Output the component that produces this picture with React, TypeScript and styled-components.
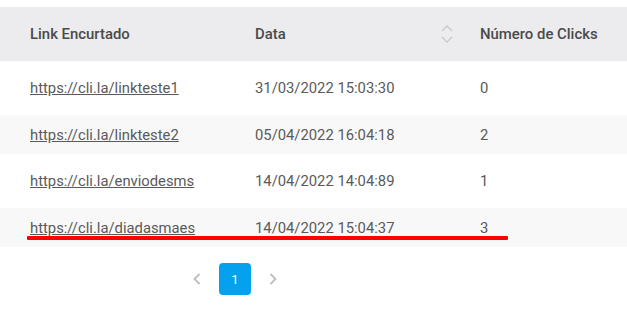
import React from "react";
import styled, { createGlobalStyle } from "styled-components";

interface Row {
  link: string;
  date: string;
  clicks: number;
}

const rows: Row[] = [
  { link: "https://cli.la/linkteste1", date: "31/03/2022 15:03:30", clicks: 0 },
  { link: "https://cli.la/linkteste2", date: "05/04/2022 16:04:18", clicks: 2 },
  { link: "https://cli.la/enviodesms", date: "14/04/2022 14:04:89", clicks: 1 },
  { link: "https://cli.la/diadasmaes", date: "14/04/2022 15:04:37", clicks: 3 },
];

const GlobalStyle = createGlobalStyle`
  body {
    margin: 0;
    background: #fff;
    font-family: Roboto, "Liberation Sans", sans-serif;
  }
`;

const App: React.FC = () => {
  return (
    <>
      <GlobalStyle />
      <StyledPage>
        <StyledHeader>
          <StyledHeadCell>Link Encurtado</StyledHeadCell>
          <StyledHeadCell>
            Data
            <StyledSort width="12" height="18" viewBox="0 0 12 18">
              <path d="M1 6 L6 1 L11 6" />
              <path d="M1 12 L6 17 L11 12" />
            </StyledSort>
          </StyledHeadCell>
          <StyledHeadCell>Número de Clicks</StyledHeadCell>
        </StyledHeader>
        {rows.map((row, i) => (
          <StyledRow key={row.link} striped={i % 2 === 1}>
            <StyledCell>
              <StyledLink href="#">{row.link}</StyledLink>
            </StyledCell>
            <StyledCell>{row.date}</StyledCell>
            <StyledCell>{row.clicks}</StyledCell>
            {i === rows.length - 1 && <StyledMarker />}
          </StyledRow>
        ))}
        <StyledPager>
          <StyledArrow>
            <svg width="8" height="12" viewBox="0 0 8 12">
              <path d="M6.5 1 L1.5 6 L6.5 11" />
            </svg>
          </StyledArrow>
          <StyledPage1>1</StyledPage1>
          <StyledArrow>
            <svg width="8" height="12" viewBox="0 0 8 12">
              <path d="M1.5 1 L6.5 6 L1.5 11" />
            </svg>
          </StyledArrow>
        </StyledPager>
      </StyledPage>
    </>
  );
};

const StyledPage = styled.div`
  padding-top: 7px;
`;

const StyledHeader = styled.div`
  display: grid;
  grid-template-columns: 225px 225px 1fr;
  height: 54px;
  background-color: #ececee;
  align-items: center;
`;

const StyledHeadCell = styled.div`
  display: flex;
  align-items: center;
  justify-content: space-between;
  padding-left: 30px;
  font-size: 14.9px;
  font-weight: 500;
  color: #4a4a4a;
`;

const StyledSort = styled.svg`
  margin-right: -3px;
  fill: none;
  stroke: #c9c9cc;
  stroke-width: 1.3;
`;

const StyledRow = styled.div<{ striped: boolean }>`
  position: relative;
  display: grid;
  grid-template-columns: 225px 225px 1fr;
  align-items: center;
  height: ${({ striped }) => (striped ? "39px" : "54px")};
  background-color: ${({ striped }) => (striped ? "#f8f8f8" : "#fff")};
`;

const StyledCell = styled.div`
  padding-left: 30px;
  font-size: 14.8px;
  color: #5a5a5a;
`;

const StyledLink = styled.a`
  color: #5a5a5a;
  text-decoration: underline;
`;

const StyledMarker = styled.div`
  position: absolute;
  left: 27px;
  top: 28px;
  width: 481px;
  height: 4px;
  background-color: #ff0000;
  border-radius: 1px;
`;

const StyledPager = styled.div`
  display: flex;
  gap: 6px;
  padding-left: 181px;
  margin-top: 16px;
`;

const StyledArrow = styled.div`
  width: 32px;
  height: 32px;
  display: flex;
  align-items: center;
  justify-content: center;
  svg {
    fill: none;
    stroke: #bdbdbd;
    stroke-width: 1.8;
  }
`;

const StyledPage1 = styled.div`
  width: 32px;
  height: 32px;
  border-radius: 4px;
  background-color: #03a1ee;
  color: #fff;
  font-size: 13px;
  display: flex;
  align-items: center;
  justify-content: center;
`;

export default App;
